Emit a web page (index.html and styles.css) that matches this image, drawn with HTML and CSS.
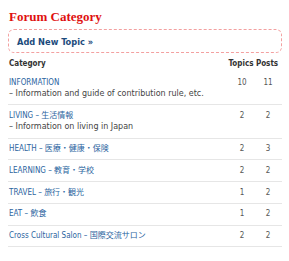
FILE: index.html
```html
<!DOCTYPE html>
<html lang="en">
<head>
  <meta charset="UTF-8">
  <title>Forum Category</title>
  <link rel="stylesheet" href="styles.css">
</head>
<body>
  <div class="forum">
    <h2 class="forum-title">Forum Category</h2>

    <div class="new-topic">
      <a href="#">Add New Topic &raquo;</a>
    </div>

    <table class="cat-table">
      <thead>
        <tr>
          <th class="col-name">Category</th>
          <th class="col-topics">Topics</th>
          <th class="col-posts">Posts</th>
        </tr>
      </thead>
      <tbody>
        <tr>
          <td class="col-name">
            <a href="#">INFORMATION</a>
            <div class="desc">&ndash; Information and guide of contribution rule, etc.</div>
          </td>
          <td class="col-topics">10</td>
          <td class="col-posts">11</td>
        </tr>
        <tr>
          <td class="col-name">
            <a href="#">LIVING &ndash; 生活情報</a>
            <div class="desc">&ndash; Information on living in Japan</div>
          </td>
          <td class="col-topics">2</td>
          <td class="col-posts">2</td>
        </tr>
        <tr>
          <td class="col-name"><a href="#">HEALTH &ndash; 医療・健康・保険</a></td>
          <td class="col-topics">2</td>
          <td class="col-posts">3</td>
        </tr>
        <tr>
          <td class="col-name"><a href="#">LEARNING &ndash; 教育・学校</a></td>
          <td class="col-topics">2</td>
          <td class="col-posts">2</td>
        </tr>
        <tr>
          <td class="col-name"><a href="#">TRAVEL &ndash; 旅行・観光</a></td>
          <td class="col-topics">1</td>
          <td class="col-posts">2</td>
        </tr>
        <tr>
          <td class="col-name"><a href="#">EAT &ndash; 飲食</a></td>
          <td class="col-topics">1</td>
          <td class="col-posts">2</td>
        </tr>
        <tr>
          <td class="col-name"><a href="#">Cross Cultural Salon &ndash; 国際交流サロン</a></td>
          <td class="col-topics">2</td>
          <td class="col-posts">2</td>
        </tr>
      </tbody>
    </table>
  </div>
</body>
</html>
```

FILE: styles.css
```css
* { margin: 0; padding: 0; box-sizing: border-box; }
body {
  background: #fff;
  color: #333;
  font-family: "DejaVu Sans Condensed", "DejaVu Sans", "Noto Sans CJK JP", sans-serif;
  font-stretch: condensed;
  font-size: 8px;
  line-height: 11px;
}
.forum {
  width: 282px;
  padding: 9px 0 0 8px;
}
.forum-title {
  font-family: "Liberation Serif", serif;
  font-stretch: normal;
  font-size: 13px;
  line-height: 15px;
  font-weight: bold;
  color: #e01010;
  padding-left: 1px;
}
.new-topic {
  margin-top: 5px;
  height: 24px;
  border: 1px dashed #f3a0a0;
  border-radius: 6px;
  display: flex;
  align-items: center;
  padding-left: 8px;
}
.new-topic a {
  font-size: 9.2px;
  font-weight: bold;
  color: #1c4b7c;
  text-decoration: none;
}
.cat-table {
  width: 100%;
  border-collapse: collapse;
  margin-top: 4.5px;
}
.cat-table th {
  font-weight: bold;
  color: #333;
  padding: 0 0 3.5px;
  text-align: left;
}
.cat-table td {
  border-bottom: 1px solid #e6e6e6;
  padding: 4.5px 0 5.25px;
  vertical-align: top;
}
.cat-table .col-name { padding-left: 1px; }
.cat-table .col-topics {
  width: 28px;
  text-align: center;
}
.cat-table .col-posts {
  width: 27px;
  padding-right: 3px;
  text-align: center;
}
.cat-table td.col-topics, .cat-table td.col-posts {
  color: #555;
  padding-left: 2px;
}
.cat-table a {
  color: #2b64a0;
  text-decoration: none;
}
.desc {
  font-family: "DejaVu Sans", "Noto Sans CJK JP", sans-serif;
  font-stretch: normal;
  color: #444;
  margin-top: 0.5px;
}
```
